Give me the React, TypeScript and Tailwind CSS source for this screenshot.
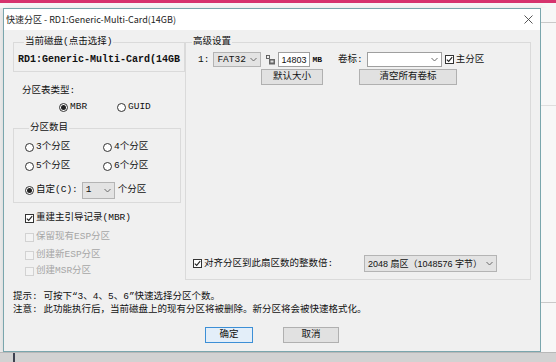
import React from 'react';

const UI = "font-['Liberation_Mono','Noto_Sans_CJK_SC',monospace] text-[9.5px] leading-[12px] text-[#111]";

function Chevron() {
  return (
    <svg width="7" height="5" viewBox="0 0 7 5" className="shrink-0">
      <polyline points="0.5,1 3.5,4 6.5,1" fill="none" stroke="#6b6b6b" strokeWidth="1" />
    </svg>
  );
}

function Radio({ checked, label }: { checked?: boolean; label: string }) {
  return (
    <div className="flex items-center gap-[2px]">
      <span className="flex h-[9px] w-[9px] items-center justify-center rounded-full border border-[#333] bg-white">
        {checked && <span className="h-[5px] w-[5px] rounded-full bg-[#222]" />}
      </span>
      <span>{label}</span>
    </div>
  );
}

function Check({ checked, disabled, label }: { checked?: boolean; disabled?: boolean; label: string }) {
  return (
    <div className={`flex h-[12px] items-center gap-[2px] ${disabled ? 'text-[#a6a6a6]' : ''}`}>
      <span
        className={`flex h-[9px] w-[9px] items-center justify-center border ${
          disabled ? 'border-[#d2d2d2] bg-[#f3f3f3]' : 'border-[#333] bg-white'
        }`}
      >
        {checked && (
          <svg width="7" height="7" viewBox="0 0 7 7">
            <polyline points="0.8,3.6 2.7,5.4 6.2,1.2" fill="none" stroke="#222" strokeWidth="1.1" />
          </svg>
        )}
      </span>
      <span>{label}</span>
    </div>
  );
}

function Combo({
  value,
  width,
  height = 15,
  white,
  sans,
}: {
  value: string;
  width: number;
  height?: number;
  white?: boolean;
  sans?: boolean;
}) {
  return (
    <div
      className={`flex items-center justify-between border px-[3px] ${
        white ? 'border-[#9f9f9f] bg-white' : 'border-[#b4b4b4] bg-[#e3e3e3]'
      } ${sans ? "font-['Liberation_Sans','Noto_Sans_CJK_SC',sans-serif] text-[9px]" : ''}`}
      style={{ width, height }}
    >
      <span className="whitespace-nowrap">{value}</span>
      <Chevron />
    </div>
  );
}

function Btn({ label, width, primary }: { label: string; width: number; primary?: boolean }) {
  return (
    <div
      className={`flex h-[16px] items-center justify-center border ${
        primary ? 'border-[#3c8fd6] bg-[#e3eef9]' : 'border-[#b0b0b0] bg-[#e1e1e1]'
      }`}
      style={{ width }}
    >
      {label}
    </div>
  );
}

export default function App() {
  return (
    <div className="flex h-[362px] w-[556px] flex-col overflow-hidden bg-[#f6f6f6]">
      <div className="h-[3px] shrink-0 bg-[#d6336e]" />
      <div className="h-[5px] shrink-0 bg-[#f7f7f7]" />

      <div className="flex h-[344px] shrink-0">
        <div className="w-[3px] bg-[#ebebeb]" />

        {/* dialog */}
        <div className="flex w-[538px] flex-col border border-[#7aa6ad] bg-[#f0f0f0] shadow-[2px_2px_6px_rgba(0,0,0,0.18)]">
          <div className="flex h-[21px] shrink-0 items-center justify-between bg-white pl-[2px] pr-[7px] font-['Noto_Sans_CJK_SC',sans-serif] text-[9px] text-[#222]">
            <span>快速分区 - RD1:Generic-Multi-Card(14GB)</span>
            <svg width="9" height="9" viewBox="0 0 9 9">
              <path d="M0.5 0.5 L8.5 8.5 M8.5 0.5 L0.5 8.5" stroke="#444" strokeWidth="0.9" />
            </svg>
          </div>

          <div className={`flex flex-1 flex-col px-[9px] pt-[6px] ${UI}`}>
            <div className="flex gap-[4px]">
              {/* left column */}
              <div className="flex w-[168px] flex-col">
                <fieldset className="h-[36px] border border-[#dadada] px-[4px]">
                  <legend className="ml-[6px] px-[1px]">当前磁盘(点击选择)</legend>
                  <div className="mt-[6px] whitespace-nowrap text-[10px] font-bold">RD1:Generic-Multi-Card(14GB</div>
                </fieldset>

                <div className="mt-[13px] pl-[9px]">分区表类型:</div>
                <div className="mt-[4px] flex pl-[46px]">
                  <div className="w-[58px]">
                    <Radio checked label="MBR" />
                  </div>
                  <Radio label="GUID" />
                </div>

                <fieldset className="mt-[9px] h-[81px] border border-[#dadada] pl-[11px]">
                  <legend className="ml-[4px] px-[1px]">分区数目</legend>
                  <div className="mt-[7px] flex">
                    <div className="w-[78px]">
                      <Radio label="3个分区" />
                    </div>
                    <Radio label="4个分区" />
                  </div>
                  <div className="mt-[7px] flex">
                    <div className="w-[78px]">
                      <Radio label="5个分区" />
                    </div>
                    <Radio label="6个分区" />
                  </div>
                  <div className="mt-[9px] flex h-[18px] items-center">
                    <Radio checked label="自定(C):" />
                    <div className="ml-[4px]">
                      <Combo value="1" width={33} height={17} />
                    </div>
                    <span className="ml-[3px]">个分区</span>
                  </div>
                </fieldset>

                <div className="mt-[9px] flex flex-col pl-[12px]">
                  <Check checked label="重建主引导记录(MBR)" />
                  <div className="mt-[7px]">
                    <Check disabled label="保留现有ESP分区" />
                  </div>
                  <div className="mt-[6px]">
                    <Check disabled label="创建新ESP分区" />
                  </div>
                  <div className="mt-[4px]">
                    <Check disabled label="创建MSR分区" />
                  </div>
                </div>
              </div>

              {/* right column */}
              <fieldset className="flex h-[244px] w-[348px] flex-col border border-[#dadada]">
                <legend className="ml-[6px] px-[1px]">高级设置</legend>
                <div className="mt-[4px] flex items-center pl-[12px]">
                  <span>1:</span>
                  <div className="ml-[4px]">
                    <Combo value="FAT32" width={48} />
                  </div>
                  <svg width="10" height="10" viewBox="0 0 10 10" className="ml-[5px]">
                    <rect x="0.5" y="0.5" width="3" height="3" fill="none" stroke="#555" strokeWidth="0.9" />
                    <rect x="3" y="4" width="6" height="5.5" fill="#666" />
                    <rect x="4.5" y="5.5" width="3" height="2" fill="#ddd" />
                  </svg>
                  <div className="ml-[2px] flex h-[15px] w-[32px] items-center border border-[#9f9f9f] bg-white px-[2px] font-['Liberation_Sans',sans-serif] text-[9px]">
                    14803
                  </div>
                  <span className="ml-[2px] text-[8px] font-bold">MB</span>
                  <span className="ml-[16px]">卷标:</span>
                  <div className="ml-[4px]">
                    <Combo value="" width={75} white />
                  </div>
                  <div className="ml-[3px]">
                    <Check checked label="主分区" />
                  </div>
                </div>
                <div className="mt-[2px] flex">
                  <div className="ml-[75px]">
                    <Btn label="默认大小" width={62} />
                  </div>
                  <div className="ml-[36px]">
                    <Btn label="清空所有卷标" width={98} />
                  </div>
                </div>

                <div className="mt-auto mb-[7px] flex items-center pl-[7px]">
                  <Check checked label="对齐分区到此扇区数的整数倍:" />
                  <div className="ml-auto mr-[33px]">
                    <Combo value="2048 扇区（1048576 字节）" width={133} height={17} sans />
                  </div>
                </div>
              </fieldset>
            </div>

            <div className="mt-[10px] leading-[13px]">
              <div>提示: 可按下“3、4、5、6”快速选择分区个数。</div>
              <div>注意: 此功能执行后，当前磁盘上的现有分区将被删除。新分区将会被快速格式化。</div>
            </div>

            <div className="mt-[11px] flex justify-center gap-[30px]">
              <Btn label="确定" width={48} primary />
              <Btn label="取消" width={56} />
            </div>
          </div>
        </div>

        {/* background window edge */}
        <div className="flex flex-1 flex-col bg-[#f7f7f7]">
          <div className="h-[14px]" />
          <div className="h-px bg-[#c9c9c9]" />
          <div className="h-[82px]" />
          <div className="h-px bg-[#dedede]" />
          <div className="h-[196px]" />
          <div className="h-px bg-[#c9c9c9]" />
        </div>
      </div>

      <div className="flex flex-1 border-t border-[#b8b8b8] bg-[#d2d2d2]">
        <div className="ml-[13px] w-[2px] bg-[#3e4150]" />
      </div>
    </div>
  );
}
